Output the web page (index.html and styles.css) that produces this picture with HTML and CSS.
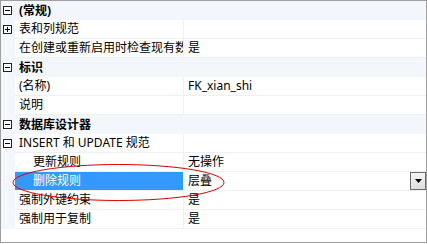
FILE: index.html
```html
<!DOCTYPE html>
<html>
<head>
<meta charset="utf-8">
<link rel="stylesheet" href="styles.css">
</head>
<body>
<div class="panel">
  <div class="row cat">
    <div class="margin"><span class="box minus"></span></div>
    <div class="catname">(常规)</div>
  </div>
  <div class="row">
    <div class="margin"><span class="box plus"></span></div>
    <div class="name">表和列规范</div>
    <div class="value"></div>
  </div>
  <div class="row">
    <div class="margin"></div>
    <div class="name">在创建或重新启用时检查现有数据</div>
    <div class="value">是</div>
  </div>
  <div class="row cat">
    <div class="margin"><span class="box minus"></span></div>
    <div class="catname">标识</div>
  </div>
  <div class="row">
    <div class="margin"></div>
    <div class="name">(名称)</div>
    <div class="value">FK_xian_shi</div>
  </div>
  <div class="row">
    <div class="margin"></div>
    <div class="name">说明</div>
    <div class="value"></div>
  </div>
  <div class="row cat">
    <div class="margin"><span class="box minus"></span></div>
    <div class="catname">数据库设计器</div>
  </div>
  <div class="row">
    <div class="margin"><span class="box minus"></span></div>
    <div class="name">INSERT 和 UPDATE 规范</div>
    <div class="value"></div>
  </div>
  <div class="row">
    <div class="margin"></div>
    <div class="name sub">更新规则</div>
    <div class="value">无操作</div>
  </div>
  <div class="row selected">
    <div class="margin"></div>
    <div class="name sub">删除规则</div>
    <div class="value"><span class="vtext">层叠</span><span class="drop"><svg width="7" height="5" viewBox="0 0 7 5"><polygon points="0,0 7,0 3.5,4" fill="#000"/></svg></span></div>
  </div>
  <div class="row">
    <div class="margin"></div>
    <div class="name">强制外键约束</div>
    <div class="value">是</div>
  </div>
  <div class="row">
    <div class="margin"></div>
    <div class="name">强制用于复制</div>
    <div class="value">是</div>
  </div>
  <svg class="mark" width="427" height="244" viewBox="0 0 427 244">
    <ellipse cx="118.5" cy="182.5" rx="105.5" ry="18" fill="none" stroke="#e00000" stroke-width="1"/>
  </svg>
</div>
</body>
</html>
```

FILE: styles.css
```css
html, body {
  margin: 0;
  padding: 0;
  background: #ffffff;
}
body {
  font-family: "Noto Sans", "Noto Sans CJK SC", sans-serif;
  font-size: 12px;
  color: #000;
}
.panel {
  position: relative;
  width: 425px;
  height: 241px;
  border: 1px solid #a0a0a0;
  background: #ffffff;
  display: flex;
  flex-direction: column;
}
.row {
  display: flex;
  height: 19px;
  flex: none;
}
.margin {
  width: 14px;
  flex: none;
  background: #f3f6fb;
  position: relative;
}
.box {
  position: absolute;
  left: 2px;
  top: 5px;
  width: 7px;
  height: 7px;
  border: 1px solid #222;
  background: #fff;
}
.box::before {
  content: "";
  position: absolute;
  left: 1px;
  top: 3px;
  width: 5px;
  height: 1px;
  background: #000;
}
.box.plus::after {
  content: "";
  position: absolute;
  left: 3px;
  top: 1px;
  width: 1px;
  height: 5px;
  background: #000;
}
.name {
  width: 164px;
  flex: none;
  padding-left: 4px;
  border-right: 1px solid #edf0f5;
  border-bottom: 1px solid #edf0f5;
  line-height: 18px;
  height: 18px;
  white-space: nowrap;
  overflow: hidden;
}
.name.sub {
  width: 150px;
  padding-left: 18px;
}
.value {
  flex: 1;
  padding-left: 4px;
  border-bottom: 1px solid #edf0f5;
  line-height: 18px;
  height: 18px;
  white-space: nowrap;
  overflow: hidden;
  display: flex;
}
.vtext {
  flex: 1;
}
.cat {
  background: #f3f6fb;
}
.catname {
  flex: 1;
  padding-left: 4px;
  font-weight: bold;
  line-height: 19px;
  white-space: nowrap;
}
.selected .name {
  background: #3399ff;
  color: #fff;
}
.drop {
  width: 14px;
  height: 16px;
  border: 1px solid #6a6a6a;
  background: linear-gradient(#f4f4f4, #dedede);
  display: flex;
  align-items: center;
  justify-content: center;
  margin-top: 0px;
}
.mark {
  position: absolute;
  left: -1px;
  top: -1px;
  pointer-events: none;
}
```
